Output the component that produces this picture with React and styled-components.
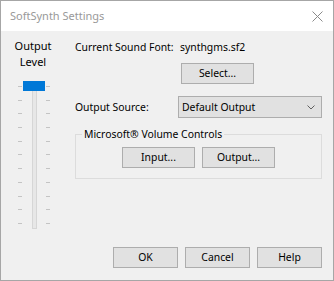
import React from "react";
import styled, { createGlobalStyle } from "styled-components";

const Global = createGlobalStyle`
  html, body { margin: 0; padding: 0; background: #ffffff; }
  body { font-family: "Noto Sans", "Open Sans", sans-serif; font-size: 10.4px; color: #000; }
  * { box-sizing: border-box; }
`;

const Window = styled.div`
  width: 334px;
  height: 281px;
  border: 1px solid #a6a6a6;
  display: flex;
  flex-direction: column;
  background: #f0f0f0;
`;

const TitleBar = styled.div`
  height: 30px;
  flex: none;
  background: #ffffff;
  display: flex;
  align-items: center;
  justify-content: space-between;
  padding: 0 10px 0 9px;
`;

const Title = styled.span`
  color: #999999;
  font-size: 11px;
  line-height: 16px;
`;

const Body = styled.div`
  flex: 1;
  display: grid;
  grid-template-columns: 64px 1fr;
  grid-template-rows: 1fr auto;
  column-gap: 10px;
  padding: 0 11px 12px 0;
  white-space: nowrap;
`;

const LeftCol = styled.div`
  display: flex;
  flex-direction: column;
  align-items: center;
  padding-top: 7px;
`;

const SliderLabel = styled.div`
  text-align: center;
  line-height: 16px;
  margin-bottom: 11px;
  font-size: 11px;
`;

const SliderWrap = styled.div`
  position: relative;
  display: flex;
  height: 148px;
  width: 32px;
  margin-left: 1px;
`;

const Ticks = styled.div`
  display: flex;
  flex-direction: column;
  justify-content: space-between;
  padding: 5px 0;
  width: 4px;
  margin-right: ${(p) => p.$gap}px;
`;

const Tick = styled.div`
  height: 1px;
  width: 4px;
  background: #c4c4c4;
`;

const Track = styled.div`
  width: 5px;
  margin-top: 4px;
  border: 1px solid #d6d6d6;
  background: #e7e7e7;
  margin-right: 9px;
`;

const Thumb = styled.div`
  position: absolute;
  left: 5px;
  top: 0;
  width: 22px;
  height: 10px;
  background: #0078d7;
`;

const RightCol = styled.div`
  display: flex;
  flex-direction: column;
  padding-top: 8px;
`;

const Row = styled.div`
  display: flex;
  align-items: center;
  line-height: 16px;
`;

const Label = styled.span`
  width: 105px;
  flex: none;
`;

const Button = styled.button`
  font: inherit;
  color: #000;
  width: ${(p) => p.$w || 65}px;
  height: 21px;
  padding: 0;
  background: #e1e1e1;
  border: 1px solid #adadad;
  border-radius: 0;
  line-height: 17px;
`;

const SelectRow = styled.div`
  display: flex;
  padding-left: 106px;
  margin-top: 8px;
`;

const SourceRow = styled(Row)`
  margin-top: 12px;
`;

const Dropdown = styled.div`
  width: 144px;
  height: 22px;
  margin-left: -2px;
  background: #e1e1e1;
  border: 1px solid #adadad;
  display: flex;
  align-items: center;
  justify-content: space-between;
  padding: 0 6px 0 3px;
`;

const Group = styled.fieldset`
  margin: 8px 0 0 0;
  padding: 5px 0 10px 0;
  border: 1px solid #dcdcdc;
  display: flex;
  justify-content: center;
  gap: 7px;
`;

const Legend = styled.legend`
  margin-left: 6px;
  padding: 0 2px;
  line-height: 16px;
`;

const Footer = styled.div`
  grid-column: 1 / span 2;
  display: flex;
  justify-content: flex-end;
  gap: 7px;
`;

export default function App() {
  const ticks = Array.from({ length: 11 });
  return (
    <>
      <Global />
      <Window>
        <TitleBar>
          <Title>SoftSynth Settings</Title>
          <svg width="11" height="11" viewBox="0 0 11 11">
            <path d="M0.5 0.5 L10.5 10.5 M10.5 0.5 L0.5 10.5" stroke="#8a8a8a" strokeWidth="1" fill="none" />
          </svg>
        </TitleBar>
        <Body>
          <LeftCol>
            <SliderLabel>
              Output
              <br />
              Level
            </SliderLabel>
            <SliderWrap>
              <Ticks $gap={10}>
                {ticks.map((_, i) => (
                  <Tick key={i} />
                ))}
              </Ticks>
              <Track />
              <Ticks $gap={0}>
                {ticks.map((_, i) => (
                  <Tick key={i} />
                ))}
              </Ticks>
              <Thumb />
            </SliderWrap>
          </LeftCol>
          <RightCol>
            <Row>
              <Label>Current Sound Font:</Label>
              <span>synthgms.sf2</span>
            </Row>
            <SelectRow>
              <Button $w={73}>Select...</Button>
            </SelectRow>
            <SourceRow>
              <Label>Output Source:</Label>
              <Dropdown>
                <span>Default Output</span>
                <svg width="8" height="5" viewBox="0 0 8 5">
                  <path d="M0.5 0.5 L4 4 L7.5 0.5" stroke="#606060" strokeWidth="1" fill="none" />
                </svg>
              </Dropdown>
            </SourceRow>
            <Group>
              <Legend>Microsoft® Volume Controls</Legend>
              <Button $w={73}>Input...</Button>
              <Button $w={73}>Output...</Button>
            </Group>
          </RightCol>
          <Footer>
            <Button>OK</Button>
            <Button>Cancel</Button>
            <Button>Help</Button>
          </Footer>
        </Body>
      </Window>
    </>
  );
}
